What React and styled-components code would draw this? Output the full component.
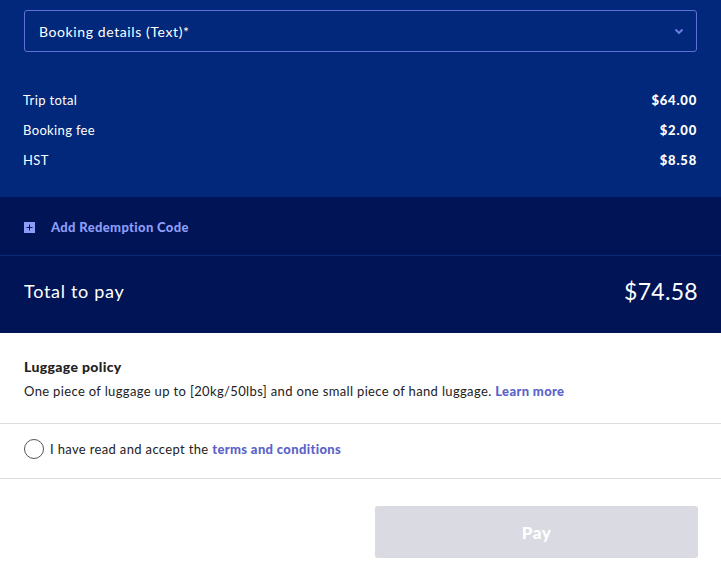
import React from 'react';
import styled, { createGlobalStyle } from 'styled-components';

const Global = createGlobalStyle`
  body {
    margin: 0;
    font-family: "Lato", "Noto Sans", sans-serif;
    background: #ffffff;
    letter-spacing: 0.35px;
  }
`;

const Summary = styled.div`
  background: #01287a;
  padding: 10px 24px 28px 23px;
  color: #ffffff;
`;

const Select = styled.div`
  display: flex;
  align-items: center;
  justify-content: space-between;
  height: 40px;
  border: 1px solid #6170d6;
  border-radius: 3px;
  padding: 0 12px 0 14px;
  font-size: 14px;
  letter-spacing: 0.6px;
  margin-left: 1px;
`;

const Lines = styled.div`
  display: flex;
  flex-direction: column;
  gap: 12px;
  margin-top: 39px;
`;

const Line = styled.div`
  display: flex;
  justify-content: space-between;
  font-size: 13px;
  line-height: 18px;
`;

const Value = styled.span`
  font-weight: 900;
  letter-spacing: 0.8px;
`;

const Dark = styled.div`
  background: #001456;
  color: #ffffff;
`;

const Redeem = styled.div`
  display: flex;
  align-items: center;
  gap: 16px;
  height: 56px;
  padding: 2px 24px 0;
  border-bottom: 1px solid #0b2a78;
  color: #8d9df7;
  font-size: 13px;
  font-weight: 900;
`;

const Total = styled.div`
  display: flex;
  justify-content: space-between;
  align-items: center;
  height: 70px;
  padding: 0 23px 7px 24px;
  font-size: 18px;
  letter-spacing: 0.7px;
`;

const Amount = styled.span`
  font-size: 23px;
  letter-spacing: 0.3px;
`;

const Section = styled.div`
  padding: ${p => p.$pad};
  border-bottom: ${p => (p.$line ? '1px solid #dedede' : 'none')};
  color: #222;
  font-size: 13px;
`;

const Title = styled.div`
  font-size: 14px;
  font-weight: 900;
  margin-bottom: 8px;
`;

const Link = styled.a`
  color: #5b63c9;
  font-weight: 900;
`;

const Check = styled.label`
  display: flex;
  align-items: center;
  gap: 6px;
`;

const Circle = styled.span`
  width: 18px;
  height: 18px;
  border: 1px solid #555;
  border-radius: 50%;
`;

const Footer = styled.div`
  display: flex;
  justify-content: flex-end;
  padding: 27px 23px 0;
`;

const Pay = styled.button`
  width: 323px;
  height: 52px;
  border: none;
  border-radius: 3px;
  background: #d9dae2;
  color: #ffffff;
  font-family: inherit;
  font-size: 17px;
  font-weight: 900;
  letter-spacing: 0.5px;
`;

export default function App() {
  return (
    <>
      <Global />
      <Summary>
        <Select>
          <span>Booking details (Text)*</span>
          <svg width="10" height="7" viewBox="0 0 10 7">
            <path d="M1.5 1.5 L5 5 L8.5 1.5" stroke="#7080e6" strokeWidth="1.8" fill="none" />
          </svg>
        </Select>
        <Lines>
          <Line><span>Trip total</span><Value>$64.00</Value></Line>
          <Line><span>Booking fee</span><Value>$2.00</Value></Line>
          <Line><span>HST</span><Value>$8.58</Value></Line>
        </Lines>
      </Summary>
      <Dark>
        <Redeem>
          <svg width="11" height="11" viewBox="0 0 11 11">
            <rect width="11" height="11" fill="#8d9df7" />
            <path d="M5.5 2.5 V8.5 M2.5 5.5 H8.5" stroke="#001456" strokeWidth="1" />
          </svg>
          Add Redemption Code
        </Redeem>
        <Total>
          <span>Total to pay</span>
          <Amount>$74.58</Amount>
        </Total>
      </Dark>
      <Section $pad="25px 24px 24px" $line>
        <Title>Luggage policy</Title>
        <div>
          One piece of luggage up to [20kg/50lbs] and one small piece of hand luggage. <Link>Learn more</Link>
        </div>
      </Section>
      <Section $pad="15px 24px 19px" $line>
        <Check>
          <Circle />
          <span>I have read and accept the <Link>terms and conditions</Link></span>
        </Check>
      </Section>
      <Footer>
        <Pay>Pay</Pay>
      </Footer>
    </>
  );
}
